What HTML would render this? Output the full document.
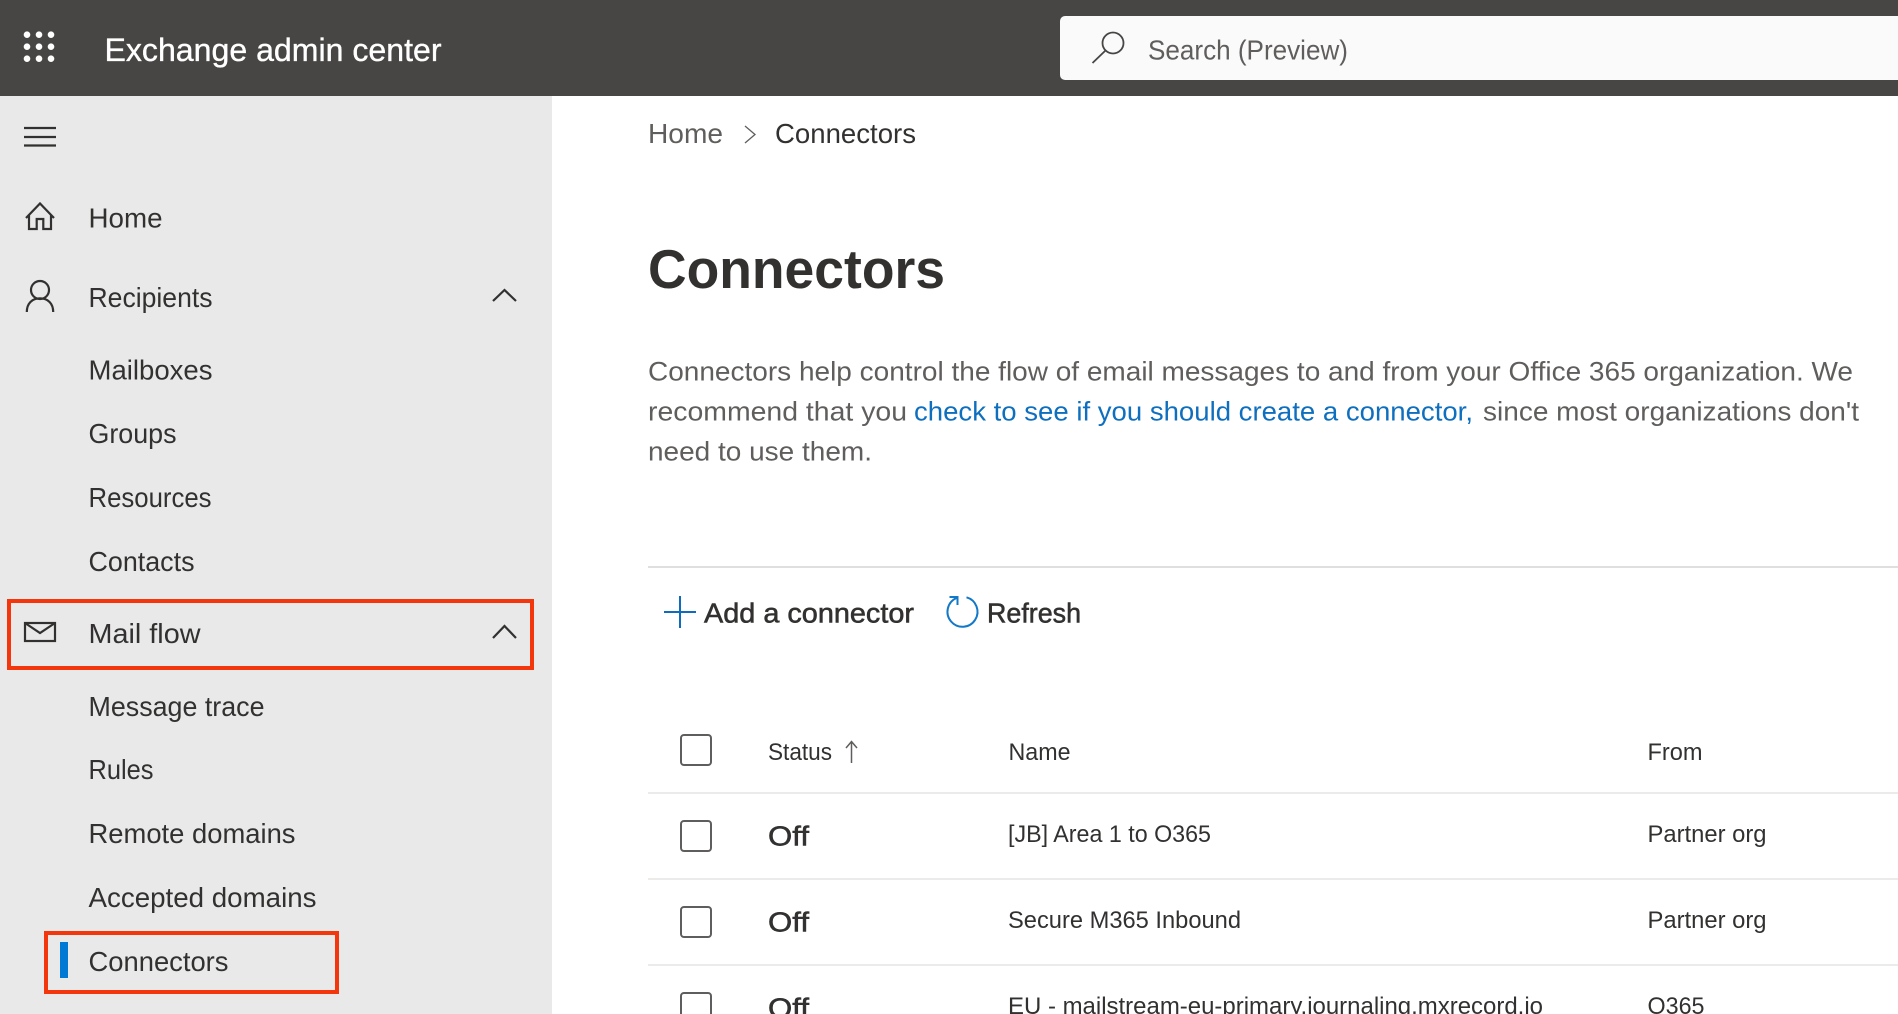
<!DOCTYPE html>
<html><head><meta charset="utf-8"><title>Exchange admin center</title>
<style>
html,body{margin:0;padding:0;width:1898px;height:1014px;overflow:hidden;background:#fff}
svg{display:block;width:1898px;height:1014px;overflow:hidden}
text{font-family:"Liberation Sans",sans-serif;fill:#323130}
.n{font-size:27.5px}
.p{font-size:27px;fill:#605e5c}
.t{font-size:24px}
.s{font-size:27.5px;stroke:#323130;stroke-width:.55px}
</style></head><body>
<svg width="1898" height="1014" viewBox="0 0 1898 1014" xmlns="http://www.w3.org/2000/svg">
<rect width="1898" height="1014" fill="#fff"/>
<rect width="552" height="918" y="96" fill="#e9e9e9"/>
<rect width="1898" height="96" fill="#484644"/>
<g fill="#fff"><circle cx="27" cy="34.700" r="3.300"/><circle cx="39" cy="34.700" r="3.300"/><circle cx="51" cy="34.700" r="3.300"/><circle cx="27" cy="46.700" r="3.300"/><circle cx="39" cy="46.700" r="3.300"/><circle cx="51" cy="46.700" r="3.300"/><circle cx="27" cy="58.700" r="3.300"/><circle cx="39" cy="58.700" r="3.300"/><circle cx="51" cy="58.700" r="3.300"/></g>
<text x="104.500" y="61" font-size="32" style="fill:#fff;stroke:#fff;stroke-width:.35px" textLength="337" lengthAdjust="spacingAndGlyphs">Exchange admin center</text>
<path d="M1065 16H1898V80H1065a5 5 0 0 1-5-5V21a5 5 0 0 1 5-5z" fill="#fafafa"/>
<g fill="none" stroke="#484644" stroke-width="1.800"><circle cx="1113" cy="43" r="10.500"/><path d="M1105.500 50.500L1092.500 63"/></g>
<text x="1148" y="59.500" font-size="28" style="fill:#605e5c" textLength="200" lengthAdjust="spacingAndGlyphs">Search (Preview)</text>

<g fill="none" stroke="#323130" stroke-width="2.200">
<path d="M24 128H56M24 137H56M24 145.500H56"/>
<path d="M26 218L40 203.500L54 218M29 214.500V229H36.700V219H43.300V229H51V214.500"/>
<circle cx="40" cy="290" r="9"/><path d="M26.800 312C26.800 303.500 32 298.300 40 298.300S53.200 303.500 53.200 312"/>
<path d="M493 301L504.500 290L516 301"/>
<rect x="25" y="623" width="30" height="18"/><path d="M25 623L40 633L55 623"/>
<path d="M493 638L504.500 626L516 638"/>
</g>
<text class="n" x="88.500" y="227.500" textLength="74" lengthAdjust="spacingAndGlyphs">Home</text>
<text class="n" x="88.500" y="307" textLength="124" lengthAdjust="spacingAndGlyphs">Recipients</text>
<text class="n" x="88.500" y="379.500" textLength="124" lengthAdjust="spacingAndGlyphs">Mailboxes</text>
<text class="n" x="88.500" y="443" textLength="88" lengthAdjust="spacingAndGlyphs">Groups</text>
<text class="n" x="88.500" y="507" textLength="123" lengthAdjust="spacingAndGlyphs">Resources</text>
<text class="n" x="88.500" y="571" textLength="106" lengthAdjust="spacingAndGlyphs">Contacts</text>
<text class="n" x="88.500" y="643" textLength="112" lengthAdjust="spacingAndGlyphs">Mail flow</text>
<text class="n" x="88.500" y="716" textLength="176" lengthAdjust="spacingAndGlyphs">Message trace</text>
<text class="n" x="88.500" y="779" textLength="65" lengthAdjust="spacingAndGlyphs">Rules</text>
<text class="n" x="88.500" y="843" textLength="207" lengthAdjust="spacingAndGlyphs">Remote domains</text>
<text class="n" x="88.500" y="907" textLength="228" lengthAdjust="spacingAndGlyphs">Accepted domains</text>
<text class="n" x="88.500" y="971" textLength="140" lengthAdjust="spacingAndGlyphs">Connectors</text>
<rect x="9" y="601" width="523" height="67" fill="none" stroke="#f3360c" stroke-width="4"/>
<rect x="46" y="933" width="291" height="59" fill="none" stroke="#f3360c" stroke-width="4"/>
<rect x="60" y="942" width="8" height="36" fill="#0078d4"/>

<text class="n" x="648" y="143" style="fill:#605e5c" textLength="75" lengthAdjust="spacingAndGlyphs">Home</text>
<path d="M745 126L755 134.500L745 143" fill="none" stroke="#605e5c" stroke-width="1.300"/>
<text class="n" x="775" y="143" textLength="141" lengthAdjust="spacingAndGlyphs">Connectors</text>
<text x="648" y="288" font-size="55" font-weight="bold" textLength="297" lengthAdjust="spacingAndGlyphs">Connectors</text>
<text class="p" x="648" y="380.500" textLength="1205" lengthAdjust="spacingAndGlyphs">Connectors help control the flow of email messages to and from your Office 365 organization. We</text>
<text class="p" x="648" y="420.500" textLength="259" lengthAdjust="spacingAndGlyphs">recommend that you</text>
<text class="p" x="914" y="420.500" style="fill:#0f6fbf" textLength="559" lengthAdjust="spacingAndGlyphs">check to see if you should create a connector,</text>
<text class="p" x="1483" y="420.500" textLength="376" lengthAdjust="spacingAndGlyphs">since most organizations don't</text>
<text class="p" x="648" y="460.500" textLength="224" lengthAdjust="spacingAndGlyphs">need to use them.</text>

<rect x="648" y="566" width="1250" height="2" fill="#e1dfdd"/>
<path d="M664 612H696M680 596V628" stroke="#0f6cbd" stroke-width="2" fill="none"/>
<text class="s" x="704" y="622.500" textLength="210" lengthAdjust="spacingAndGlyphs">Add a connector</text>
<g fill="none" stroke="#1278c8" stroke-width="2"><path d="M966.500 597.300A15 15 0 1 1 956.500 598"/><path d="M949.500 597H957.500V605"/></g>
<text class="s" x="987" y="622.500" textLength="94" lengthAdjust="spacingAndGlyphs">Refresh</text>

<g fill="none" stroke="#605e5c" stroke-width="2">
<rect x="681" y="735" width="30" height="30" rx="3"/>
<rect x="681" y="821" width="30" height="30" rx="3"/>
<rect x="681" y="907" width="30" height="30" rx="3"/>
<rect x="681" y="993" width="30" height="30" rx="3"/>
<path d="M851.500 763V742M846 748L851.500 741.500L857 748" stroke-width="1.500"/>
</g>
<text class="t" x="768" y="760" textLength="64" lengthAdjust="spacingAndGlyphs">Status</text>
<text class="t" x="1008.500" y="760" textLength="62" lengthAdjust="spacingAndGlyphs">Name</text>
<text class="t" x="1647.500" y="760" textLength="55" lengthAdjust="spacingAndGlyphs">From</text>
<g fill="#edebe9"><rect x="648" y="792" width="1250" height="2"/><rect x="648" y="878" width="1250" height="2"/><rect x="648" y="964" width="1250" height="2"/></g>
<text class="s" x="768" y="845.500" textLength="41" lengthAdjust="spacingAndGlyphs">Off</text>
<text class="s" x="768" y="931.500" textLength="41" lengthAdjust="spacingAndGlyphs">Off</text>
<text class="s" x="768" y="1017.500" textLength="41" lengthAdjust="spacingAndGlyphs">Off</text>
<text class="t" x="1008" y="842" textLength="203" lengthAdjust="spacingAndGlyphs">[JB] Area 1 to O365</text>
<text class="t" x="1008" y="928" textLength="233" lengthAdjust="spacingAndGlyphs">Secure M365 Inbound</text>
<text class="t" x="1008" y="1014" textLength="535" lengthAdjust="spacingAndGlyphs">EU - mailstream-eu-primary.journaling.mxrecord.io</text>
<text class="t" x="1647.500" y="842" textLength="119" lengthAdjust="spacingAndGlyphs">Partner org</text>
<text class="t" x="1647.500" y="928" textLength="119" lengthAdjust="spacingAndGlyphs">Partner org</text>
<text class="t" x="1647.500" y="1014" textLength="57" lengthAdjust="spacingAndGlyphs">O365</text>
</svg>
</body></html>
